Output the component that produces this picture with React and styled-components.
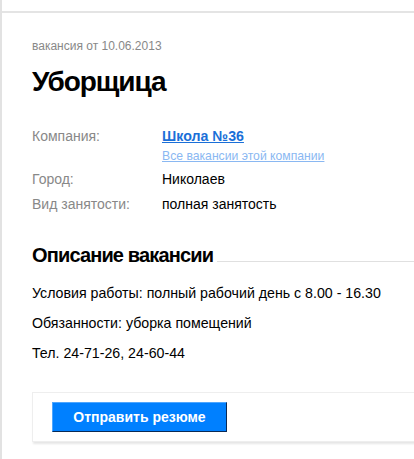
import React from "react";
import styled, { createGlobalStyle } from "styled-components";

const Global = createGlobalStyle`
  html, body { margin: 0; padding: 0; background: #fff; }
  body { font-family: "Liberation Sans", Arial, sans-serif; }
`;

const Page = styled.div`
  width: 414px;
  height: 459px;
  box-sizing: border-box;
  border-left: 2px solid #e2e2e2;
  overflow: hidden;
`;

const TopRule = styled.div`
  height: 11px;
  border-bottom: 2px solid #e4e4e4;
`;

const Content = styled.div`
  padding: 26px 0 0 30px;
`;

const DateLine = styled.div`
  font-size: 12px;
  color: #888;
  line-height: 14px;
`;

const Title = styled.h1`
  margin: 13px 0 0;
  font-size: 28px;
  font-weight: bold;
  letter-spacing: -1.1px;
  line-height: 32px;
  color: #000;
`;

const Info = styled.div`
  margin-top: 26px;
  display: grid;
  grid-template-columns: 130px 1fr;
  font-size: 14px;
`;

const Label = styled.div`
  color: #888;
  line-height: 25px;
`;

const Value = styled.div`
  color: #000;
  line-height: 25px;
`;

const CompanyLink = styled.a`
  display: block;
  color: #1a6fd8;
  font-weight: bold;
  font-size: 14.2px;
  text-decoration: underline;
  line-height: 20px;
  margin-top: 2px;
`;

const AllLink = styled.a`
  display: block;
  color: #8ab8f2;
  font-size: 12.2px;
  text-decoration: underline;
  line-height: 14px;
  margin-top: 3px;
  margin-bottom: 4px;
`;

const SectionHead = styled.div`
  margin-top: 26px;
  display: flex;
  align-items: flex-end;
  gap: 4px;
`;

const SectionTitle = styled.h2`
  margin: 0;
  font-size: 20px;
  font-weight: bold;
  letter-spacing: -0.85px;
  line-height: 24px;
  white-space: nowrap;
`;

const SectionRule = styled.div`
  flex: 1;
  border-bottom: 1px solid #e0e0e0;
  margin-bottom: 5px;
`;

const Paras = styled.div`
  margin-top: 11px;
`;

const Para = styled.p`
  margin: 0;
  font-size: 14.2px;
  line-height: 30px;
  color: #000;
`;

const Footer = styled.div`
  margin-top: 24px;
  margin-right: -10px;
  border: 1px solid #eee;
  box-shadow: 0 3px 2px -1px #e6e6e6;
  padding: 9px 20px 9px 19px;
`;

const SendButton = styled.button`
  width: 175px;
  height: 30px;
  background: #0080ff;
  color: #fff;
  font-family: "Liberation Sans", Arial, sans-serif;
  font-size: 14px;
  font-weight: bold;
  border: none;
  border-top: 1px solid #4da6ff;
  border-left: 1px solid #4da6ff;
  border-right: 1px solid #0a2a55;
  border-bottom: 1px solid #0a2a55;
  padding: 0;
  cursor: pointer;
`;

export default function App() {
  return (
    <>
      <Global />
      <Page>
        <TopRule />
        <Content>
          <DateLine>вакансия от 10.06.2013</DateLine>
          <Title>Уборщица</Title>
          <Info>
            <Label>Компания:</Label>
            <Value>
              <CompanyLink href="#">Школа №36</CompanyLink>
              <AllLink href="#">Все вакансии этой компании</AllLink>
            </Value>
            <Label>Город:</Label>
            <Value>Николаев</Value>
            <Label>Вид занятости:</Label>
            <Value>полная занятость</Value>
          </Info>
          <SectionHead>
            <SectionTitle>Описание вакансии</SectionTitle>
            <SectionRule />
          </SectionHead>
          <Paras>
            <Para>Условия работы: полный рабочий день с 8.00 - 16.30</Para>
            <Para>Обязанности: уборка помещений</Para>
            <Para>Тел. 24-71-26, 24-60-44</Para>
          </Paras>
          <Footer>
            <SendButton>Отправить резюме</SendButton>
          </Footer>
        </Content>
      </Page>
    </>
  );
}
